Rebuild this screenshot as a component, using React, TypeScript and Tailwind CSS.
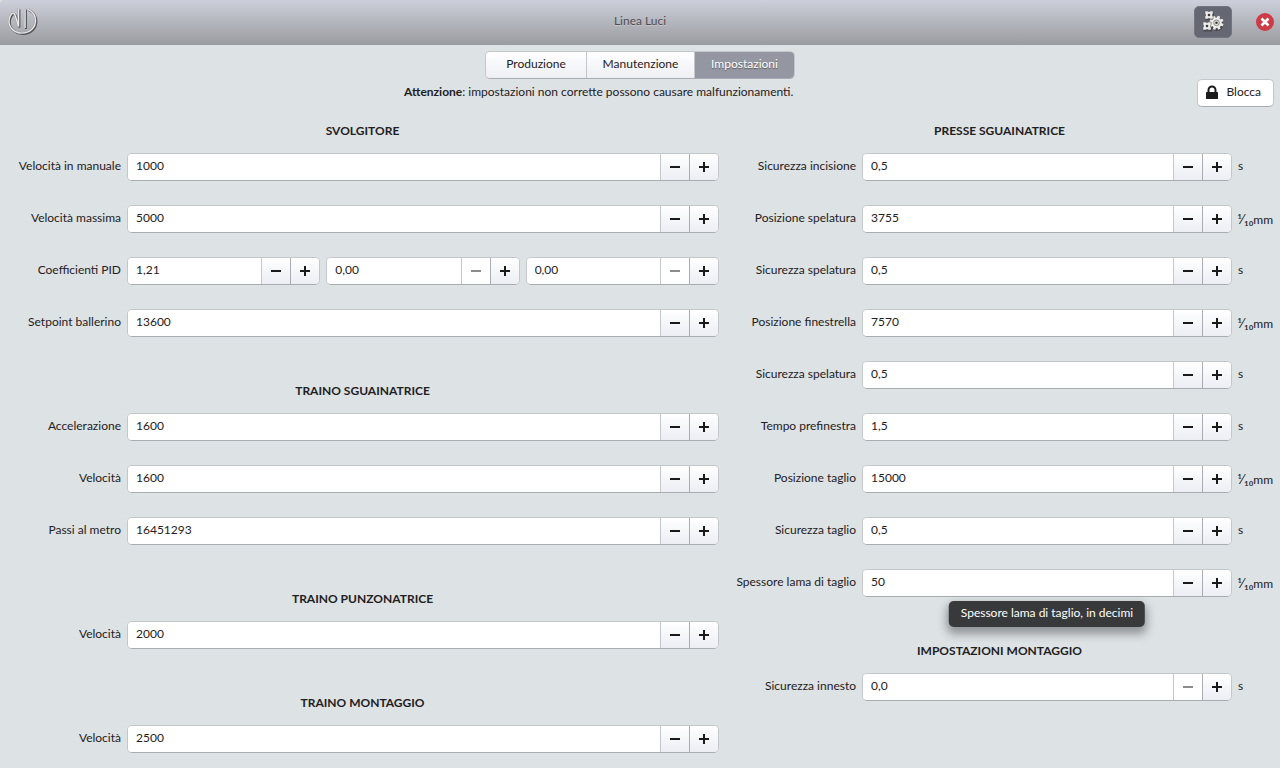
import { useId } from 'react';
import clsx from 'clsx';

interface SpinProps {
  id?: string;
  value: string;
  label?: string;
  atMin?: boolean;
}

interface Field {
  label: string;
  spins: SpinProps[];
  unit?: 's' | 'tenths';
  tooltip?: string;
}

interface Section {
  title: string;
  fields: Field[];
}

const LEFT: Section[] = [
  {
    title: 'SVOLGITORE',
    fields: [
      { label: 'Velocità in manuale', spins: [{ value: '1000' }] },
      { label: 'Velocità massima', spins: [{ value: '5000' }] },
      {
        label: 'Coefficienti PID',
        spins: [
          { value: '1,21' },
          { value: '0,00', label: 'Coefficiente I', atMin: true },
          { value: '0,00', label: 'Coefficiente D', atMin: true },
        ],
      },
      { label: 'Setpoint ballerino', spins: [{ value: '13600' }] },
    ],
  },
  {
    title: 'TRAINO SGUAINATRICE',
    fields: [
      { label: 'Accelerazione', spins: [{ value: '1600' }] },
      { label: 'Velocità', spins: [{ value: '1600' }] },
      { label: 'Passi al metro', spins: [{ value: '16451293' }] },
    ],
  },
  {
    title: 'TRAINO PUNZONATRICE',
    fields: [{ label: 'Velocità', spins: [{ value: '2000' }] }],
  },
  {
    title: 'TRAINO MONTAGGIO',
    fields: [{ label: 'Velocità', spins: [{ value: '2500' }] }],
  },
];

const RIGHT: Section[] = [
  {
    title: 'PRESSE SGUAINATRICE',
    fields: [
      { label: 'Sicurezza incisione', spins: [{ value: '0,5' }], unit: 's' },
      { label: 'Posizione spelatura', spins: [{ value: '3755' }], unit: 'tenths' },
      { label: 'Sicurezza spelatura', spins: [{ value: '0,5' }], unit: 's' },
      { label: 'Posizione finestrella', spins: [{ value: '7570' }], unit: 'tenths' },
      { label: 'Sicurezza spelatura', spins: [{ value: '0,5' }], unit: 's' },
      { label: 'Tempo prefinestra', spins: [{ value: '1,5' }], unit: 's' },
      { label: 'Posizione taglio', spins: [{ value: '15000' }], unit: 'tenths' },
      { label: 'Sicurezza taglio', spins: [{ value: '0,5' }], unit: 's' },
      {
        label: 'Spessore lama di taglio',
        spins: [{ value: '50' }],
        unit: 'tenths',
        tooltip: 'Spessore lama di taglio, in decimi',
      },
    ],
  },
  {
    title: 'IMPOSTAZIONI MONTAGGIO',
    fields: [{ label: 'Sicurezza innesto', spins: [{ value: '0,0', atMin: true }], unit: 's' }],
  },
];

// ring open at the top left, with the two uprights standing inside it
const LOGO_RING = 'M22 3.500C26.500 5.500 29.500 9.500 29.500 14.500c0 7-5.500 12.500-13.500 12.500C8.500 27 3 22 3 15.500c0-3.500 1.200-6.300 3-8';
const LOGO_BARS = 'M5.500 7.500c2-1 3 0 3.700 2L12.500 20.500V2.500M19 2.500V22';

function Logo() {
  return (
    <svg className="h-8 w-8" viewBox="0 0 32 32" fill="none">
      <g stroke="#505053" strokeWidth="2" transform="translate(0.900 0.900)">
        <path d={LOGO_RING} />
        <path d={LOGO_BARS} />
      </g>
      <g stroke="#909095" strokeWidth="2">
        <path d={LOGO_RING} />
        <path d={LOGO_BARS} />
      </g>
      <g stroke="#ececef" strokeWidth="1.200">
        <path d={LOGO_RING} />
        <path d={LOGO_BARS} />
      </g>
    </svg>
  );
}

function GearsIcon() {
  const teeth = [20, 65, 110, 155, 200, 245, 290, 335];
  return (
    <svg className="h-6 w-6" viewBox="0 0 24 24">
      <g fill="#303136" opacity="0.5">
        <rect x="4.500" y="3" width="8.500" height="7.500" />
        <rect x="2.500" y="14" width="8.500" height="7.500" />
        <circle cx="16" cy="14.500" r="6.500" />
      </g>
      <g fill="#ecebe6">
        {teeth.map((a) => (
          <rect key={a} x="14.200" y="5.700" width="2.600" height="4" rx="0.400" transform={`rotate(${a} 15.500 12.800)`} />
        ))}
        <circle cx="15.500" cy="12.800" r="5.300" />
      </g>
      <g fill="#ecebe6" stroke="#55565e" strokeWidth="0.500">
        <path d="M4 1h2.500l.5.500h2l.5-.5H12v2.500l-.5.500v2l.5.500V9H9.500L9 8.500H7L6.500 9H4V6.500L4.500 6V4L4 3.500z" />
        <path d="M2 12h2.500l.5.500h2l.5-.5H10v2.500l-.5.500v2l.5.500V20H7.500L7 19.500H5L4.500 20H2v-2.500l.5-.5v-2L2 14.500z" />
      </g>
      <circle cx="15.500" cy="12.800" r="2.800" fill="none" stroke="#88888a" strokeWidth="1" />
      <g fill="#3c3d42">
        <circle cx="15.500" cy="12.800" r="1.300" />
        <circle cx="8" cy="5" r="1.300" />
        <circle cx="6" cy="16" r="1.300" />
      </g>
    </svg>
  );
}

function LockIcon() {
  return (
    <svg className="h-4 w-4" viewBox="0 0 16 16">
      <path d="M4.500 8V5a3.500 3.500 0 0 1 7 0v3" fill="none" stroke="#1a1a1a" strokeWidth="2" />
      <rect x="2" y="7" width="12" height="7" rx="0.500" fill="#1a1a1a" />
    </svg>
  );
}

function TitleBar() {
  return (
    <header className="flex h-[45px] items-center rounded-tl-sm border-b border-[#9a9ca0] bg-linear-to-b from-[#cdd0da] to-[#9b9da1] px-[6px]">
      <div className="flex flex-1">
        <Logo />
      </div>
      <h1 className="pb-[2px] text-[#4f4b50] [text-shadow:0_1px_0_rgba(255,255,255,0.3)]">Linea Luci</h1>
      <div className="flex flex-1 items-center justify-end gap-6">
        <button
          aria-label="Impostazioni macchina"
          className="flex h-8 w-[38px] items-center justify-center rounded-[5px] border border-[#73757f] bg-[#656772]"
        >
          <GearsIcon />
        </button>
        <button aria-label="Chiudi" className="flex h-[18px] w-[18px] items-center justify-center rounded-full bg-[#ce3b46]">
          <svg className="h-[18px] w-[18px]" viewBox="0 0 18 18">
            <path d="M5.500 5.500l7 7M12.500 5.500l-7 7" stroke="#fff" strokeWidth="2.600" />
          </svg>
        </button>
      </div>
    </header>
  );
}

const TAB = 'flex items-center justify-center pb-[3px]';
const LIGHT_TAB = 'border-r border-[#c3c6cb] bg-linear-to-b from-white to-[#edeff4]';

function Tabs() {
  return (
    <nav className="mx-auto grid h-7 w-[310px] grid-cols-[101px_108px_1fr] overflow-hidden rounded-[5px] border border-[#c3c6cb] border-b-[#a9acb2]">
      <button className={clsx(TAB, LIGHT_TAB)}>Produzione</button>
      <button className={clsx(TAB, LIGHT_TAB)}>Manutenzione</button>
      <button className={clsx(TAB, 'bg-[#9497a1] text-white [text-shadow:0_1px_1px_rgba(0,0,0,0.4)]')}>
        Impostazioni
      </button>
    </nav>
  );
}

function SpinBox({ id, value, label, atMin }: SpinProps) {
  const step = 'flex w-[29px] shrink-0 items-center justify-center border-l bg-linear-to-b from-white to-[#eceef4]';

  return (
    <div className="flex h-7 min-w-0 flex-1 overflow-hidden rounded-[5px] border border-[#c3c6cb] border-b-[#a9acb2] bg-white">
      <input
        id={id}
        aria-label={label}
        defaultValue={value}
        inputMode="decimal"
        className="min-w-0 flex-1 bg-white pb-[2px] pl-2 outline-none"
      />
      <button
        aria-label="Diminuisci"
        disabled={atMin}
        className={clsx(step, 'group border-[#c3c6cb] disabled:to-white')}
      >
        <svg className="h-[10px] w-[10px] group-disabled:opacity-50" viewBox="0 0 10 10">
          <path d="M0 4h10v2H0z" fill="#1a1a1a" />
        </svg>
      </button>
      <button aria-label="Aumenta" className={clsx(step, 'border-[#a9acb2]')}>
        <svg className="h-[10px] w-[10px]" viewBox="0 0 10 10">
          <path d="M0 4h4V0h2v4h4v2H6v4H4V6H0z" fill="#1a1a1a" />
        </svg>
      </button>
    </div>
  );
}

function FieldRow({ field, labelWidth }: { field: Field; labelWidth: string }) {
  const id = useId();

  return (
    <div className="flex items-center gap-[6px]">
      <label htmlFor={id} className={clsx('shrink-0 pb-[2px] text-right whitespace-nowrap', labelWidth)}>
        {field.label}
      </label>
      <div className="relative flex min-w-0 flex-1 gap-[6px]">
        {field.spins.map((spin, index) => (
          <SpinBox key={index} {...spin} id={index === 0 ? id : undefined} />
        ))}
        {field.tooltip && (
          <div
            role="tooltip"
            className="absolute top-full left-1/2 mt-1 flex h-[26px] -translate-x-1/2 items-center rounded-[5px] bg-[#38393a] px-3 pb-[2px] whitespace-nowrap text-white shadow-[0_5px_10px_2px_rgba(0,0,0,0.35)]"
          >
            {field.tooltip}
          </div>
        )}
      </div>
      {field.unit === 's' && <span className="w-9 shrink-0 pb-[2px]">s</span>}
      {field.unit === 'tenths' && (
        <span className="w-9 shrink-0 whitespace-nowrap">
          <span className="text-[14px] leading-4">⅟₁₀</span>mm
        </span>
      )}
    </div>
  );
}

function Column({ sections, labelWidth }: { sections: Section[]; labelWidth: string }) {
  return (
    <div className="flex min-w-0 flex-col gap-[46px]">
      {sections.map((section) => (
        <section key={section.title}>
          <h2 className="mb-[14px] text-center leading-4 font-bold">{section.title}</h2>
          <div className="flex flex-col gap-6">
            {section.fields.map((field, index) => (
              <FieldRow key={index} field={field} labelWidth={labelWidth} />
            ))}
          </div>
        </section>
      ))}
    </div>
  );
}

export default function App() {
  return (
    <div className="min-h-screen bg-[#dde2e5] font-[Lato,sans-serif] text-[12px] leading-4 text-[#1f2022]">
      <TitleBar />
      <main className="px-[6px] pt-[6px]">
        <Tabs />
        <div className="flex items-start gap-[6px]">
          <p className="flex-1 pt-[5px] text-center">
            <b>Attenzione</b>: impostazioni non corrette possono causare malfunzionamenti.
          </p>
          <button className="flex h-7 items-center gap-[6px] rounded-[5px] border border-[#c3c6cb] border-b-[#a9acb2] bg-white px-[6px] pr-[12px]">
            <LockIcon />
            <span className="pb-[2px]">Blocca</span>
          </button>
        </div>
        <div className="grid grid-cols-[713fr_549fr] items-start gap-[6px] pt-4 pb-[15px]">
          <Column sections={LEFT} labelWidth="w-[115px]" />
          <Column sections={RIGHT} labelWidth="w-[131px]" />
        </div>
      </main>
    </div>
  );
}
